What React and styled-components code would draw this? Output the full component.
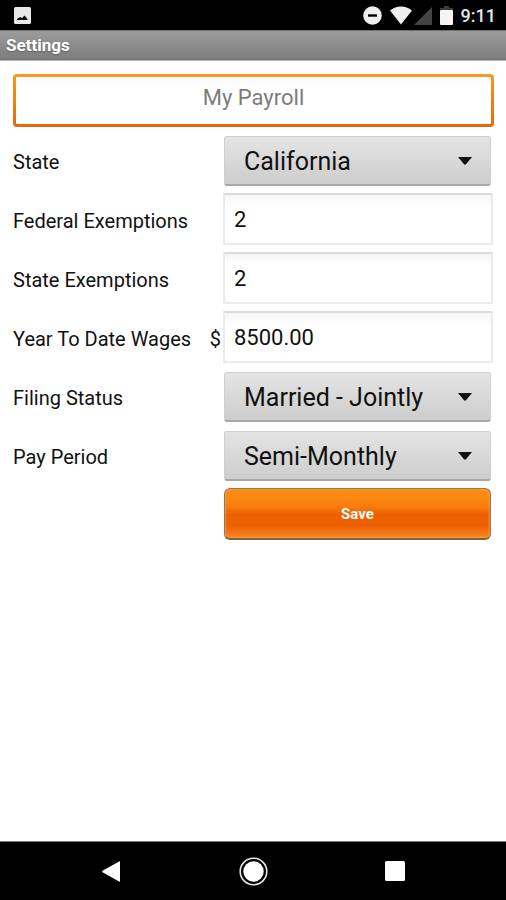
import { useState } from "react";
import styled, { createGlobalStyle } from "styled-components";

const GlobalStyle = createGlobalStyle`
  * {
    box-sizing: border-box;
  }

  body {
    margin: 0;
    background: #fff;
    color: #111;
    font-family: Roboto, "Liberation Sans", sans-serif;
  }
`;

const Screen = styled.div`
  display: flex;
  flex-direction: column;
  min-height: 100vh;
`;

const StatusBar = styled.header`
  display: flex;
  justify-content: space-between;
  align-items: center;
  height: 30px;
  padding: 1px 10px 0 14px;
  background: #000;
  color: #e6e6e6;
`;

const StatusIcons = styled.div`
  display: flex;
  align-items: center;
  gap: 8px;

  svg {
    display: block;
  }
`;

const Reception = styled.div`
  display: flex;
  align-items: center;
  gap: 2px;
`;

const Clock = styled.span`
  font-size: 18px;
  font-weight: 500;
  line-height: 29px;
`;

const TitleBar = styled.h1`
  margin: 0;
  padding: 0 6px;
  border-top: 1px solid #6e6e6e;
  border-bottom: 1px solid #b4b4b4;
  background: linear-gradient(#9c9c9c, #7e7e7e 94%, #707070);
  color: #fff;
  font-size: 17px;
  font-weight: 700;
  line-height: 29px;
  text-shadow: 0 1px 2px rgba(0, 0, 0, 0.3);
`;

const Form = styled.form`
  flex: 1;
  display: flex;
  flex-direction: column;
  gap: 7px;
  padding: 13px 12px 0 13px;
`;

const NameInput = styled.input`
  width: 100%;
  height: 53px;
  padding: 0 8px 7px;
  border: 3px solid transparent;
  border-radius: 4px;
  outline: none;
  background: linear-gradient(#f8f8f8, #fff 10px) padding-box,
    linear-gradient(#f99a22, #e2680f) border-box;
  color: #111;
  font: 22px Roboto, "Liberation Sans", sans-serif;
  text-align: center;

  &::placeholder {
    color: #7c7c7c;
    opacity: 1;
  }
`;

const Row = styled.div`
  display: grid;
  grid-template-columns: 210px 1fr;
  align-items: center;
  height: 52px;
  padding-right: 1px;
`;

const Label = styled.label`
  display: flex;
  justify-content: space-between;
  padding: 4px 2px 0 0;
  font-size: 20px;
  line-height: 24px;
`;

const TextInput = styled.input`
  width: 100%;
  height: 52px;
  padding: 0 9px;
  border: 2px solid #ebebeb;
  border-top-color: #dcdcdc;
  border-radius: 1px;
  outline: none;
  background: linear-gradient(#f6f6f6, #fff 12px);
  color: #111;
  font: 22px Roboto, "Liberation Sans", sans-serif;
`;

const Spinner = styled.div`
  display: grid;
  align-items: center;
  align-self: end;
  margin: 0 2px 0 1px;

  > * {
    grid-area: 1 / 1;
  }

  svg {
    justify-self: end;
    margin-right: 19px;
    pointer-events: none;
  }
`;

const Select = styled.select`
  width: 100%;
  height: 50px;
  padding: 1px 40px 0 19px;
  appearance: none;
  border: 1px solid #cfcfcf;
  border-bottom: 2px solid #a8a8a8;
  border-radius: 3px;
  outline: none;
  background: linear-gradient(#e4e4e4, #cdcdcd);
  color: #111;
  font: 25px Roboto, "Liberation Sans", sans-serif;
`;

const SaveButton = styled.button`
  grid-column: 2;
  height: 52px;
  margin: 0 2px 0 1px;
  border: 1px solid #96774f;
  border-bottom: 2px solid #86623a;
  border-radius: 6px;
  background: linear-gradient(
    #f98a16,
    #fd8a14 18%,
    #f67a0c 38%,
    #ec6000 52%,
    #ec6000 74%,
    #fb8424
  );
  box-shadow: inset 0 0 2px 1px rgba(255, 170, 80, 0.6);
  color: #fff;
  font: 700 15px Roboto, "Liberation Sans", sans-serif;
  cursor: pointer;
`;

const NavBar = styled.nav`
  display: flex;
  justify-content: space-around;
  align-items: center;
  height: 59px;
  padding: 0 40px;
  border-top: 1px solid #777;
  background: #000;
`;

const NavButton = styled.button`
  display: flex;
  justify-content: center;
  align-items: center;
  width: 48px;
  height: 48px;
  padding: 0;
  border: none;
  background: none;
  cursor: pointer;
`;

const PictureIcon = () => (
  <svg width="17" height="17" viewBox="0 0 17 17">
    <rect width="17" height="17" rx="1.5" fill="#e8e8e8" />
    <path d="M3 13v-1l3-2 2 1 2.500-2.500L13.500 12v1z" fill="#111" />
  </svg>
);

const DndIcon = () => (
  <svg width="19" height="19" viewBox="0 0 19 19">
    <circle cx="9.5" cy="9.5" r="9.3" fill="#efefef" />
    <rect x="5" y="8.3" width="9" height="2.4" fill="#000" />
  </svg>
);

const WifiIcon = () => (
  <svg width="22" height="19" viewBox="0 0 22 19">
    <path d="M0 4.5C6.5-.7 15.5-.7 22 4.5L11 18.5z" fill="#efefef" />
  </svg>
);

const SignalIcon = () => (
  <svg width="18" height="18" viewBox="0 0 18 18">
    <path d="M18 0v18H0z" fill="#434343" />
  </svg>
);

const BatteryIcon = () => (
  <svg width="13" height="19" viewBox="0 0 13 19">
    <path d="M4 0h5v2h4v3H0V2h4z" fill="#3c3c3c" />
    <rect y="4" width="13" height="15" rx="1" fill="#f4f4f4" />
  </svg>
);

const CaretIcon = () => (
  <svg width="14" height="8" viewBox="0 0 14 8">
    <path d="M0 0h14L8 7.3q-1 .9-2 0z" fill="#111" />
  </svg>
);

const BackIcon = () => (
  <svg width="18" height="21" viewBox="0 0 18 21">
    <path d="M18 0v21L.5 11.2q-.7-.7 0-1.4z" fill="#fff" />
  </svg>
);

const HomeIcon = () => (
  <svg width="29" height="29" viewBox="0 0 29 29">
    <circle cx="14.5" cy="14.5" r="13.3" fill="none" stroke="#e4e4e4" strokeWidth="1.6" />
    <circle cx="14.5" cy="14.5" r="10.2" fill="#fff" />
  </svg>
);

const RecentsIcon = () => (
  <svg width="20" height="20" viewBox="0 0 20 20">
    <rect width="20" height="20" rx="1.5" fill="#fff" />
  </svg>
);

const fields = [
  {
    id: "state",
    label: "State",
    options: ["California", "Nevada", "New York", "Oregon", "Texas"]
  },
  { id: "federalExemptions", label: "Federal Exemptions" },
  { id: "stateExemptions", label: "State Exemptions" },
  { id: "wages", label: "Year To Date Wages", unit: "$" },
  {
    id: "filingStatus",
    label: "Filing Status",
    options: ["Single", "Married - Jointly", "Married - Separately"]
  },
  {
    id: "payPeriod",
    label: "Pay Period",
    options: ["Weekly", "Bi-Weekly", "Semi-Monthly", "Monthly"]
  }
];

const Field = ({ id, label, unit, options, value, onChange }) => (
  <Row>
    <Label htmlFor={id}>
      {label}
      {unit && <span>{unit}</span>}
    </Label>
    {options ? (
      <Spinner>
        <Select id={id} value={value} onChange={onChange}>
          {options.map((option) => (
            <option key={option}>{option}</option>
          ))}
        </Select>
        <CaretIcon />
      </Spinner>
    ) : (
      <TextInput id={id} inputMode="decimal" value={value} onChange={onChange} />
    )}
  </Row>
);

const App = () => {
  const [name, setName] = useState("");
  const [settings, setSettings] = useState({
    state: "California",
    federalExemptions: "2",
    stateExemptions: "2",
    wages: "8500.00",
    filingStatus: "Married - Jointly",
    payPeriod: "Semi-Monthly"
  });

  const handleChange = (id) => (e) =>
    setSettings({ ...settings, [id]: e.target.value });

  return (
    <Screen>
      <GlobalStyle />
      <StatusBar>
        <PictureIcon />
        <StatusIcons>
          <DndIcon />
          <Reception>
            <WifiIcon />
            <SignalIcon />
          </Reception>
          <BatteryIcon />
          <Clock>9:11</Clock>
        </StatusIcons>
      </StatusBar>
      <TitleBar>Settings</TitleBar>
      <Form onSubmit={(e) => e.preventDefault()}>
        <NameInput
          aria-label="Payroll name"
          placeholder="My Payroll"
          value={name}
          onChange={(e) => setName(e.target.value)}
        />
        {fields.map((field) => (
          <Field
            key={field.id}
            {...field}
            value={settings[field.id]}
            onChange={handleChange(field.id)}
          />
        ))}
        <Row>
          <SaveButton type="submit">Save</SaveButton>
        </Row>
      </Form>
      <NavBar>
        <NavButton aria-label="Back">
          <BackIcon />
        </NavButton>
        <NavButton aria-label="Home">
          <HomeIcon />
        </NavButton>
        <NavButton aria-label="Recent apps">
          <RecentsIcon />
        </NavButton>
      </NavBar>
    </Screen>
  );
};

export default App;
